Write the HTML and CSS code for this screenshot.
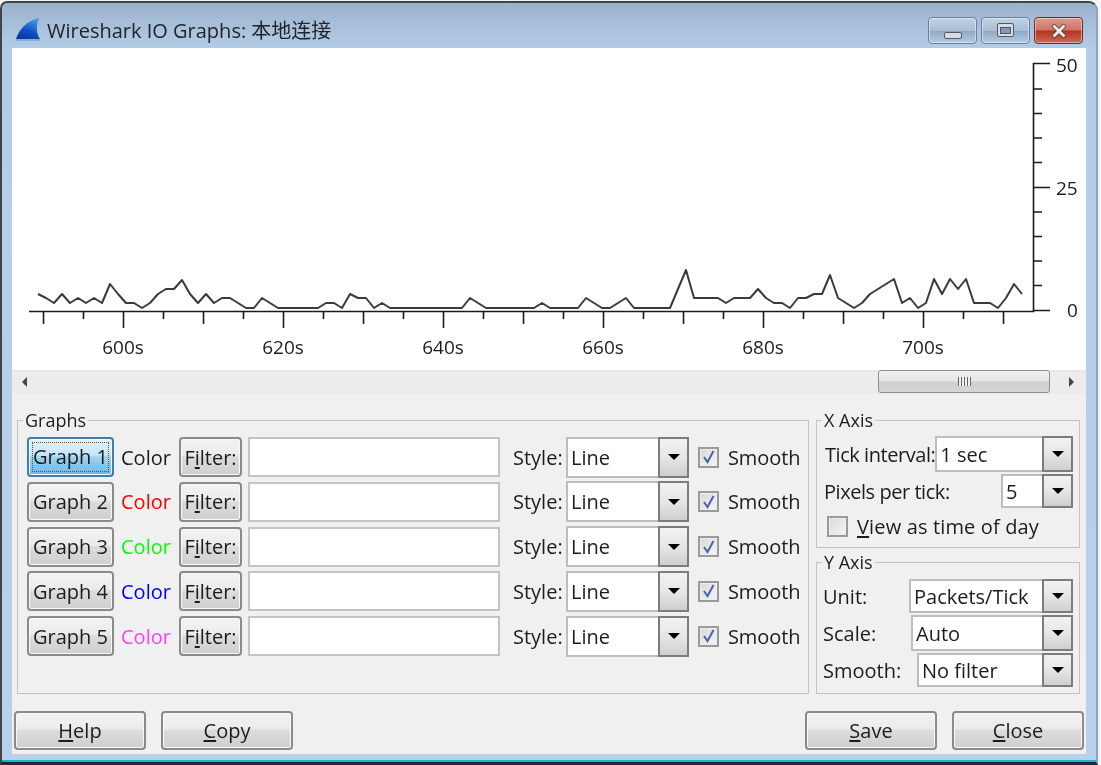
FILE: index.html
```html
<!DOCTYPE html>
<html lang="en">
<head>
<meta charset="utf-8">
<title>Wireshark IO Graphs</title>
<link rel="stylesheet" href="styles.css">
</head>
<body>
<div class="window">
  <header class="titlebar">
    <svg class="app-icon" width="26" height="26" viewBox="0 0 26 26">
      <defs><linearGradient id="fin" x1="0.7" y1="0" x2="0.3" y2="1"><stop offset="0" stop-color="#4a9be6"/><stop offset="0.6" stop-color="#0f50c4"/><stop offset="1" stop-color="#0a3a9c"/></linearGradient></defs>
      <path d="M1 22 C4 13 11 4 24 1 C21 8 21 16 25 22 Z" fill="url(#fin)"/>
      <path d="M1 22 H25 L25.500 24 H1 Z" fill="#7fb0de"/>
    </svg>
    <span class="title">Wireshark IO Graphs: 本地连接</span>
    <div class="caption-buttons">
      <div class="cap cap-min"><span class="glyph-min"></span></div>
      <div class="cap cap-max"><span class="glyph-max"></span></div>
      <div class="cap cap-close">
        <svg width="22" height="16" viewBox="0 0 22 16"><path d="M5 2 L17 14 M17 2 L5 14" stroke="#4a2f2c" stroke-width="4.500"/><path d="M5.500 2.500 L16.500 13.500 M16.500 2.500 L5.500 13.500" stroke="#efe9e6" stroke-width="3"/></svg>
      </div>
    </div>
  </header>
  <main class="client">
    <div class="plot">
      <svg class="plot-svg" width="1074" height="322" viewBox="12 48 1074 322">
        <path class="axis" d="M29 311.500H1033.500V63.500H1050"/>
        <path class="axis" d="M1033 187.500H1050M1033 310.500H1050"/>
        <path class="axis" d="M1033 89H1042M1033 113.500H1042M1033 138H1042M1033 162.500H1042M1033 212H1042M1033 236.500H1042M1033 261H1042M1033 285.500H1042"/>
        <path class="axis" d="M43.500 311V324M83.500 311V319M123.500 311V328M163.500 311V319M203.500 311V324M243.500 311V319M283.500 311V328M323.500 311V319M363.500 311V324M403.500 311V319M443.500 311V328M483.500 311V319M523.500 311V324M563.500 311V319M603.500 311V328M643.500 311V319M683.500 311V324M723.500 311V319M763.500 311V328M803.500 311V319M843.500 311V324M883.500 311V319M923.500 311V328M963.500 311V319M1003.500 311V324"/>
        <polyline class="trace" points="38,294 46,298 54,303 62,294 70,303 78,298 86,303 94,298 102,303 110,284 118,294 126,303 134,303 142,308 150,303 158,294 166,289 174,289 182,280 190,294 198,303 206,294 214,303 222,298 230,298 238,303 246,308 254,308 262,298 270,303 278,308 318,308 326,303 334,303 342,308 350,294 358,298 366,298 374,308 382,303 390,308 462,308 470,298 478,303 486,308 534,308 542,303 550,308 578,308 586,298 594,303 602,308 610,308 618,303 626,298 634,308 670,308 678,289 686,270 694,298 718,298 726,303 734,298 750,298 758,289 766,298 774,303 782,303 790,308 798,298 806,298 814,294 822,294 830,275 838,298 846,303 854,308 862,303 870,294 878,289 886,284 894,279 902,303 910,298 918,308 926,303 934,279 942,294 950,279 958,289 966,279 974,303 982,303 990,303 998,308 1006,298 1014,284 1022,294"/>
        <g class="tick-label">
          <text x="123" y="354">600s</text><text x="283" y="354">620s</text><text x="443" y="354">640s</text><text x="603" y="354">660s</text><text x="763" y="354">680s</text><text x="923" y="354">700s</text>
        </g>
        <g class="tick-label-y">
          <text x="1056" y="72">50</text><text x="1056" y="195">25</text><text x="1067" y="317">0</text>
        </g>
      </svg>
    </div>
    <div class="scrollbar">
      <span class="arrow-left"></span>
      <div class="thumb"><span class="grip"></span></div>
      <span class="arrow-right"></span>
    </div>
    <div class="controls">
      <fieldset class="box graphs">
        <legend>Graphs</legend>
        <div class="graph-row">
          <button class="btn graph-btn focused"><span class="focus-ring">Graph 1</span></button>
          <span class="color c1">Color</span>
          <button class="btn filter-btn">F<u>i</u>lter:</button>
          <div class="entry"></div>
          <span class="style-label">Style:</span>
          <div class="combo style-combo"><span class="combo-text">Line</span><span class="combo-arrow"></span></div>
          <span class="check checked"><svg width="16" height="16" viewBox="0 0 16 16"><path d="M3 8 L6.500 13 L12.500 2" fill="none" stroke="#4a62ac" stroke-width="2"/></svg></span>
          <span class="smooth">Smooth</span>
        </div>
        <div class="graph-row">
          <button class="btn graph-btn">Graph 2</button>
          <span class="color c2">Color</span>
          <button class="btn filter-btn">F<u>i</u>lter:</button>
          <div class="entry"></div>
          <span class="style-label">Style:</span>
          <div class="combo style-combo"><span class="combo-text">Line</span><span class="combo-arrow"></span></div>
          <span class="check checked"><svg width="16" height="16" viewBox="0 0 16 16"><path d="M3 8 L6.500 13 L12.500 2" fill="none" stroke="#4a62ac" stroke-width="2"/></svg></span>
          <span class="smooth">Smooth</span>
        </div>
        <div class="graph-row">
          <button class="btn graph-btn">Graph 3</button>
          <span class="color c3">Color</span>
          <button class="btn filter-btn">F<u>i</u>lter:</button>
          <div class="entry"></div>
          <span class="style-label">Style:</span>
          <div class="combo style-combo"><span class="combo-text">Line</span><span class="combo-arrow"></span></div>
          <span class="check checked"><svg width="16" height="16" viewBox="0 0 16 16"><path d="M3 8 L6.500 13 L12.500 2" fill="none" stroke="#4a62ac" stroke-width="2"/></svg></span>
          <span class="smooth">Smooth</span>
        </div>
        <div class="graph-row">
          <button class="btn graph-btn">Graph 4</button>
          <span class="color c4">Color</span>
          <button class="btn filter-btn">F<u>i</u>lter:</button>
          <div class="entry"></div>
          <span class="style-label">Style:</span>
          <div class="combo style-combo"><span class="combo-text">Line</span><span class="combo-arrow"></span></div>
          <span class="check checked"><svg width="16" height="16" viewBox="0 0 16 16"><path d="M3 8 L6.500 13 L12.500 2" fill="none" stroke="#4a62ac" stroke-width="2"/></svg></span>
          <span class="smooth">Smooth</span>
        </div>
        <div class="graph-row">
          <button class="btn graph-btn">Graph 5</button>
          <span class="color c5">Color</span>
          <button class="btn filter-btn">F<u>i</u>lter:</button>
          <div class="entry"></div>
          <span class="style-label">Style:</span>
          <div class="combo style-combo"><span class="combo-text">Line</span><span class="combo-arrow"></span></div>
          <span class="check checked"><svg width="16" height="16" viewBox="0 0 16 16"><path d="M3 8 L6.500 13 L12.500 2" fill="none" stroke="#4a62ac" stroke-width="2"/></svg></span>
          <span class="smooth">Smooth</span>
        </div>
      </fieldset>
      <div class="axes">
        <fieldset class="box x-axis">
          <legend>X Axis</legend>
          <div class="form-row r-tick"><span class="tight">Tick interval:</span><div class="combo w-tick"><span class="combo-text">1 sec</span><span class="combo-arrow"></span></div></div>
          <div class="form-row r-pixels"><span class="tight">Pixels per tick:</span><div class="combo w-pixels"><span class="combo-text">5</span><span class="combo-arrow"></span></div></div>
          <div class="view-row"><span class="check"></span><span class="view-label"><u>V</u>iew as time of day</span></div>
        </fieldset>
        <fieldset class="box y-axis">
          <legend>Y Axis</legend>
          <div class="form-row r-unit"><span>Unit:</span><div class="combo w-unit"><span class="combo-text">Packets/Tick</span><span class="combo-arrow"></span></div></div>
          <div class="form-row r-scale"><span>Scale:</span><div class="combo w-scale"><span class="combo-text">Auto</span><span class="combo-arrow"></span></div></div>
          <div class="form-row r-smooth"><span>Smooth:</span><div class="combo w-smooth"><span class="combo-text">No filter</span><span class="combo-arrow"></span></div></div>
        </fieldset>
      </div>
    </div>
    <footer class="actions">
      <button class="btn action"><u>H</u>elp</button>
      <button class="btn action"><u>C</u>opy</button>
      <span class="spacer"></span>
      <button class="btn action"><u>S</u>ave</button>
      <button class="btn action"><u>C</u>lose</button>
    </footer>
  </main>
</div>
</body>
</html>
```

FILE: styles.css
```css
* { box-sizing: border-box; }
html, body { margin: 0; padding: 0; }
body {
  width: 1101px;
  height: 765px;
  overflow: hidden;
  background: #f4f4f4;
  font-family: "Open Sans", "Noto Sans CJK SC", sans-serif;
  font-size: 20px;
  color: #1c1c1c;
}
u { text-underline-offset: 2px; text-decoration-thickness: 1.500px; }

.window {
  width: 1098px;
  height: 764px;
  margin-top: 1px;
  border: 2px solid #3f4448;
  border-bottom: 3px solid #1f2a30;
  border-right-color: #8ea3b6;
  border-radius: 7px 9px 0 0;
  background: linear-gradient(180deg, #9bb2cd 0, #b4cde6 46px, #b9d2ec 100%);
  box-shadow: inset 0 -2px 0 #17b5cf;
  padding: 0 10px 8px 10px;
  display: flex;
  flex-direction: column;
  filter: blur(.35px);
}

.titlebar {
  height: 45px;
  flex: none;
  display: flex;
  align-items: flex-start;
  margin: 0 -10px 0 -10px;
  padding: 0 13px 0 13px;
}
.app-icon { margin-top: 14px; flex: none; }
.title {
  margin: 14px 0 0 6px;
  font-size: 20px;
  line-height: 27px;
  color: #20242c;
}
.caption-buttons { margin-left: auto; margin-top: 14px; display: flex; gap: 4px; }
.cap {
  width: 49px;
  height: 27px;
  border: 1px solid #6b7f96;
  border-radius: 4px;
  display: flex;
  align-items: center;
  justify-content: center;
  box-shadow: inset 0 0 0 1px rgba(255,255,255,.45);
  background: linear-gradient(180deg, #c1d2e4 0, #a9bed6 50%, #8fa9c4 52%, #b3cbe2 100%);
}
.cap-close {
  border-color: #6a2c30;
  background: linear-gradient(180deg, #dd9a8d 0, #cf7565 48%, #b5341f 52%, #cc6a58 100%);
}
.glyph-min {
  width: 18px;
  height: 7px;
  margin-top: 10px;
  background: #d8dde3;
  border: 1px solid #4f5866;
  border-radius: 2px;
}
.glyph-max {
  width: 17px;
  height: 14px;
  margin-top: -1px;
  background: #d8dde3;
  border: 1px solid #4f5866;
  border-radius: 2px;
  display: flex;
  align-items: center;
  justify-content: center;
}
.glyph-max::after { content: ""; width: 9px; height: 5px; background: #8397b2; border: 1px solid #4f5866; }

.client {
  flex: 1;
  display: flex;
  flex-direction: column;
  background: #f0f0f0;
  min-height: 0;
}
.plot { height: 322px; flex: none; background: #fff; }
.plot-svg { display: block; }
.axis { fill: none; stroke: #1a1a1a; stroke-width: 1.600; }
.trace { fill: none; stroke: #3a3a3a; stroke-width: 2; stroke-linejoin: round; }
.tick-label text {
  font-size: 19px;
  text-anchor: middle;
  fill: #1c1c1c;
}
.tick-label-y text { font-size: 19px; fill: #1c1c1c; }

.scrollbar {
  height: 27px;
  flex: none;
  display: flex;
  align-items: flex-start;
  background: linear-gradient(180deg, #e6e6e6 0, #ececec 3px, #ececec 24px, #f1f1f1 25px);
  padding-left: 10px;
}
.arrow-left, .arrow-right {
  width: 0;
  height: 0;
  margin-top: 7px;
  border-top: 5px solid transparent;
  border-bottom: 5px solid transparent;
}
.arrow-left { border-right: 5px solid #444; }
.arrow-right { border-left: 5px solid #444; margin-left: 19px; }
.thumb {
  width: 172px;
  height: 23px;
  margin-left: 851px;
  border: 1px solid #8f8f8f;
  border-radius: 3px;
  background: linear-gradient(180deg, #f2f2f2 0, #e4e4e4 48%, #cfcfcf 52%, #d6d6d6 100%);
  display: flex;
  align-items: center;
  justify-content: center;
}
.grip {
  width: 13px;
  height: 9px;
  background: repeating-linear-gradient(90deg, #666 0 1px, #eee 1px 3px);
}

.controls {
  flex: none;
  height: 297px;
  display: flex;
  gap: 7px;
  padding: 13px 6px 0 5px;
}
.box {
  margin: 0;
  min-width: 0;
  border: 1.500px solid #c2c2c2;
  padding: 0;
}
.box legend {
  padding: 0 2px;
  font-size: 18px;
  line-height: 21px;
}
.graphs legend { margin-left: -4px; }
.x-axis legend { margin-left: -3px; }
.y-axis legend { margin-left: -1px; }
.graphs {
  flex: 1;
  display: flex;
  flex-direction: column;
  gap: 4.750px;
  padding: 6px 0 0 9px;
}
.axes { width: 264px; flex: none; display: flex; flex-direction: column; gap: 4px; }
.x-axis { height: 138px; padding: 5px 6px 0 8px; }
.y-axis { height: 142px; padding: 6px 6px 0 6px; }

.graph-row { display: flex; align-items: center; height: 40px; }
.btn {
  font: inherit;
  color: inherit;
  padding: 0;
  border: 2px solid #8a8a8a;
  border-radius: 4px;
  background: linear-gradient(180deg, #f3f3f3 0, #ebebeb 45%, #dcdcdc 50%, #cfcfcf 100%);
  box-shadow: inset 0 0 0 1px #f8f8f8;
  white-space: nowrap;
}
.graph-btn { width: 87px; height: 40px; flex: none; }
.focused {
  border-color: #3c7fa8;
  background: linear-gradient(180deg, #e4f3fb 0, #c4e5f7 45%, #9fd3f1 50%, #6cb7e6 100%);
  padding: 3px;
}
.focus-ring {
  display: block;
  height: 100%;
  line-height: 28px;
  border: 1px dotted #7a4a20;
}
.filter-btn { width: 63px; height: 40px; flex: none; margin-left: 7px; }
.color { width: 51px; margin-left: 7px; flex: none; }
.c1 { color: #1c1c1c; }
.c2 { color: #ff0000; }
.c3 { color: #00ff00; }
.c4 { color: #0000ff; }
.c5 { color: #ff40ff; }
.entry {
  width: 252px;
  height: 40px;
  margin-left: 6px;
  flex: none;
  background: #fff;
  border: 2px solid #c4c4c4;
}
.style-label { margin-left: 13px; width: 53px; flex: none; }
.combo {
  display: flex;
  align-items: stretch;
  background: #fff;
  border: 2px solid #bdbdbd;
  flex: none;
}
.combo-text {
  flex: 1;
  padding-left: 3px;
  white-space: nowrap;
  display: flex;
  align-items: center;
}
.combo-arrow {
  width: 31px;
  margin: -2px -2px -2px 0;
  flex: none;
  border: 2px solid #7c7c7c;
  background: linear-gradient(180deg, #f2f2f2 0, #e6e6e6 50%, #cfcfcf 100%);
  display: flex;
  align-items: center;
  justify-content: center;
}
.combo-arrow::after {
  content: "";
  border-top: 6px solid #000;
  border-left: 6px solid transparent;
  border-right: 6px solid transparent;
}
.style-combo { width: 123px; height: 41px; }
.check {
  width: 21px;
  height: 21px;
  flex: none;
  border: 2px solid #9a9a9a;
  background: linear-gradient(135deg, #d8d8d8, #f6f6f6);
  box-shadow: inset 0 0 0 1px #eee;
  display: flex;
  align-items: center;
  justify-content: center;
}
.graph-row .check { margin-left: 9px; }
.smooth { margin-left: 9px; letter-spacing: -.1px; }

.form-row { display: flex; align-items: center; justify-content: space-between; }
.r-tick { height: 36px; }
.r-pixels { height: 34px; margin-top: 2px; }
.r-unit { height: 34px; }
.r-scale { height: 36px; margin-top: 2px; }
.r-smooth { height: 34px; margin-top: 2px; }
.form-row .combo { height: 100%; }
.w-tick { width: 138px; }
.w-pixels { width: 72px; }
.w-unit { width: 164px; }
.w-scale { width: 162px; }
.w-smooth { width: 156px; }
.view-row { display: flex; align-items: center; gap: 9px; margin: 8px 0 0 2px; height: 20px; }
.view-label { letter-spacing: .15px; }
.tight { letter-spacing: -.45px; white-space: nowrap; }
.r-pixels .tight { margin-left: -1px; }

.actions {
  flex: none;
  display: flex;
  gap: 15px;
  padding: 17px 2px 0 2px;
}
.spacer { flex: 1; }
.action { width: 132px; height: 39px; }
```
